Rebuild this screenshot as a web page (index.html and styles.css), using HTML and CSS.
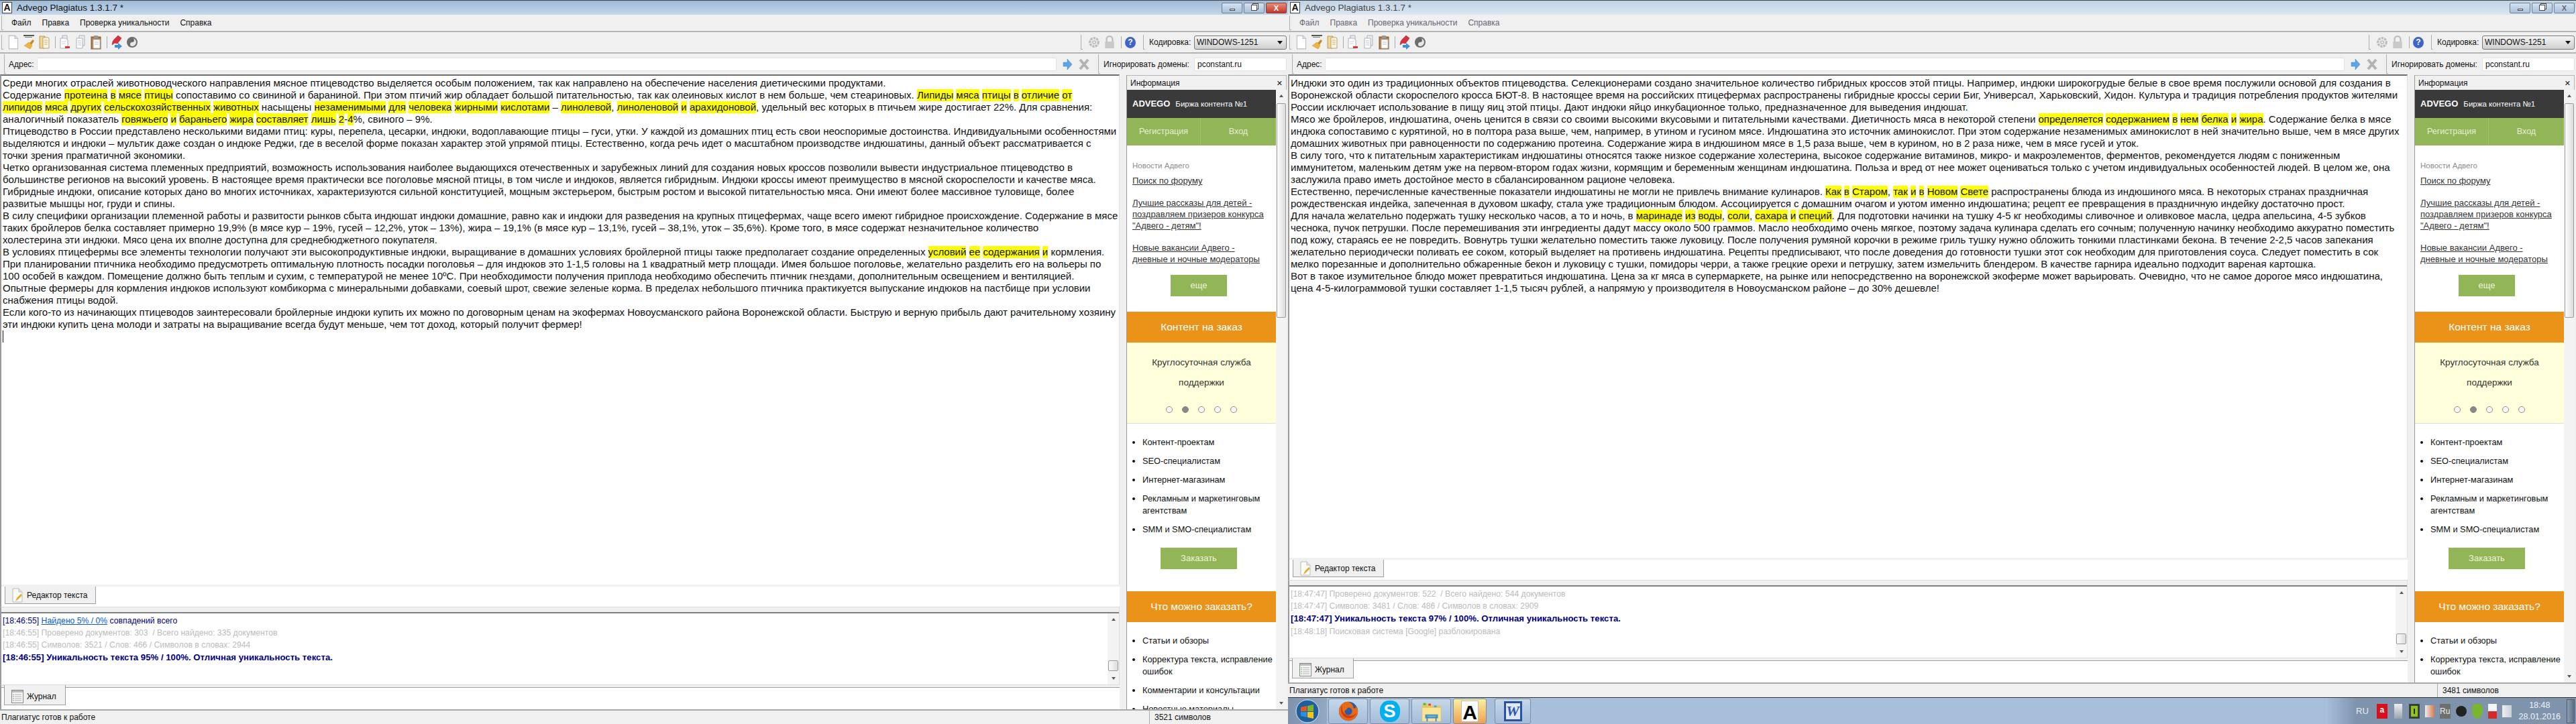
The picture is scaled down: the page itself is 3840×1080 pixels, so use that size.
FILE: index.html
```html
<!DOCTYPE html>
<html lang="ru">
<head>
<meta charset="utf-8">
<title>Advego Plagiatus</title>
<link rel="stylesheet" href="styles.css">
</head>
<body>
<svg class="defs" width="0" height="0">
  <symbol id="i-doc" viewBox="0 0 16 20"><path d="M2 1h8l4 4v14H2z" fill="#fff" stroke="#b5bcc4"/><path d="M10 1v4h4" fill="#dde3ea" stroke="#b5bcc4"/></symbol>
  <symbol id="i-html" viewBox="0 0 18 22"><path d="M15 7l-5 5 3 3 4-6z" fill="#c98a2a"/><path d="M9 11l5 5-3 5-9-5 2-1 1-1z" fill="#f0b43c" stroke="#c98a2a" stroke-width=".5"/><rect x="1" y="0" width="16" height="2" fill="#555"/><rect x="3" y="3" width="11" height="1" fill="#777"/></symbol>
  <symbol id="i-pages" viewBox="0 0 16 22"><path d="M1 2h8v18H1z" fill="#f3d48e" stroke="#bc9a55"/><path d="M6 4h8l1 1v15H6z" fill="#fff6d8" stroke="#a9a38c"/><path d="M8 8h5M8 11h5M8 14h5" stroke="#b5b29c"/></symbol>
  <symbol id="i-docminus" viewBox="0 0 16 22"><path d="M4 1h7v15H4z" fill="#e9edf2" stroke="#aab2bb"/><path d="M1 5h8l3 3v12H1z" fill="#fff" stroke="#aab2bb"/><path d="M3 10h6M3 13h6" stroke="#ccd"/><rect x="8" y="17" width="7" height="3" fill="#d33"/></symbol>
  <symbol id="i-docs" viewBox="0 0 16 22"><path d="M6 1h8v15H6z" fill="#e9edf2" stroke="#aab2bb"/><path d="M2 5h9v15H2z" fill="#fff" stroke="#aab2bb"/><path d="M4 9h5M4 12h5M4 15h5" stroke="#b8c0c8"/></symbol>
  <symbol id="i-clip" viewBox="0 0 16 22"><rect x="1" y="3" width="14" height="18" fill="#b07b48" stroke="#80562f"/><rect x="4" y="7" width="10" height="13" fill="#fff" stroke="#b8b8b8"/><rect x="5" y="1" width="6" height="4" fill="#999"/><path d="M6 11h6M6 14h6" stroke="#bbb"/></symbol>
  <symbol id="i-pin" viewBox="0 0 18 22"><path d="M11 1l5 4-6 8-4-1-4 3 1-5 2-3z" fill="#d8323c" stroke="#962029" stroke-width=".6"/><path d="M6 15h5v-3l6 5-6 5v-3H6z" fill="#3f8fe0"/></symbol>
  <symbol id="i-yin" viewBox="0 0 18 18"><circle cx="9" cy="9" r="8" fill="#6d6d6d"/><path d="M9 3a6 6 0 0 1 0 12a3 3 0 0 1 0-6a3 3 0 0 0 0-6z" fill="#e8e8e8"/><circle cx="9" cy="6" r="1" fill="#555"/></symbol>
  <symbol id="i-gear" viewBox="0 0 16 18"><circle cx="8" cy="9" r="5.5" fill="none" stroke="#bdbdbd" stroke-width="3" stroke-dasharray="3 1"/><circle cx="8" cy="9" r="2" fill="none" stroke="#aaa"/></symbol>
  <symbol id="i-lock" viewBox="0 0 16 18"><path d="M4 8V5a4 4 0 0 1 8 0v3" fill="none" stroke="#bdbdbd" stroke-width="2"/><rect x="2" y="8" width="12" height="9" rx="1" fill="#c9c9c9"/></symbol>
  <symbol id="i-go" viewBox="0 0 16 18"><path d="M2 6h6V1l7 8-7 8v-5H2z" fill="#5aa6e6" stroke="#3f85c4" stroke-width=".5"/></symbol>
  <symbol id="i-stop" viewBox="0 0 16 18"><path d="M2 2l12 14M14 2L2 16" stroke="#b3b3b3" stroke-width="4"/></symbol>
  <symbol id="i-edit" viewBox="0 0 16 22"><path d="M1 1h9l5 5v15H1z" fill="#fbfbf6" stroke="#bbb"/><path d="M10 1v5h5" fill="#e3e3e3" stroke="#bbb"/><path d="M5 20l2-5 6-6 2 2-6 6z" fill="#e3a92f"/></symbol>
  <symbol id="i-log" viewBox="0 0 18 20"><rect x=".5" y=".5" width="17" height="19" fill="#f6f6f6" stroke="#888"/><rect x="1" y="1" width="16" height="3" fill="#bbb"/><path d="M5 7h10M5 10h10M5 13h10M5 16h10" stroke="#b0b0b0"/><path d="M2 7h2M2 10h2M2 13h2M2 16h2" stroke="#6a6"/></symbol>
  <symbol id="i-orb" viewBox="0 0 36 36"><circle cx="18" cy="18" r="17" fill="#1f5f9c" stroke="#dfe9f3"/><path d="M8 12l9-2v8H8z" fill="#e25a1c"/><path d="M18 10l9-2v10h-9z" fill="#7cb52b"/><path d="M8 19h9v8l-9-2z" fill="#2a8fe0"/><path d="M18 19h9v10l-9-2z" fill="#f7c515"/></symbol>
  <symbol id="i-ff" viewBox="0 0 36 36"><circle cx="18" cy="18" r="15" fill="#2a5aa8"/><path d="M18 3a15 15 0 1 0 15 15c0-3-1-6-3-8 0 3-2 4-4 3 0-4-3-8-8-10zM18 12a6 6 0 1 1-6 6z" fill="#e66b16"/><path d="M8 8c-3 5-2 14 4 19 7 4 15 2 19-6-5 5-15 6-20 0-3-4-3-9-3-13z" fill="#d23b10"/></symbol>
  <symbol id="i-fold" viewBox="0 0 36 36"><path d="M3 6h12l3 3h15v8H3z" fill="#e7c56a"/><rect x="5" y="5" width="4" height="3" fill="#2c2"/><rect x="13" y="6" width="4" height="3" fill="#d44"/><rect x="22" y="9" width="4" height="3" fill="#3ad"/><path d="M3 12h30v22H3z" fill="#f9e493" stroke="#d3b866" stroke-width=".6"/><path d="M11 26v8M25 26v8M9 24h18v4H9z" fill="#6fb5e0" stroke="#3f8cc4" stroke-width="2"/></symbol>
</svg>

<main class="screen">
<section class="win active left">
  <header class="titlebar">
    <span class="ticon">A</span><span class="ttext">Advego Plagiatus 1.3.1.7 *</span>
    <div class="wbtns"><span class="wbtn"><i class="min"></i></span><span class="wbtn"><i class="res"></i></span><span class="wbtn close">X</span></div>
  </header>
  <nav class="menubar"><i class="grip"></i><span>Файл</span><span>Правка</span><span>Проверка уникальности</span><span>Справка</span></nav>
  <div class="toolbar">
    <i class="grip"></i>
    <div class="tools">
      <svg class="ic"><use href="#i-doc"/></svg><svg class="ic"><use href="#i-html"/></svg><svg class="ic"><use href="#i-pages"/></svg><b class="sep"></b><svg class="ic"><use href="#i-docminus"/></svg><svg class="ic"><use href="#i-docs"/></svg><svg class="ic"><use href="#i-clip"/></svg><b class="sep"></b><svg class="ic"><use href="#i-pin"/></svg><svg class="ic"><use href="#i-yin"/></svg>
    </div>
    <i class="grip"></i>
    <div class="tools2"><svg class="ic"><use href="#i-gear"/></svg><svg class="ic"><use href="#i-lock"/></svg><b class="sep"></b><span class="help">?</span></div>
    <i class="grip"></i>
    <span class="flabel">Кодировка:</span>
    <div class="select">WINDOWS-1251<em></em></div>
  </div>
  <div class="addrbar">
    <i class="grip"></i><span class="alabel">Адрес:</span><div class="input url"></div>
    <svg class="ic go"><use href="#i-go"/></svg><svg class="ic go"><use href="#i-stop"/></svg>
    <i class="grip"></i>
    <span class="flabel ign">Игнорировать домены:</span><div class="input dom">pconstant.ru</div>
  </div>
  <div class="mainrow">
    <div class="center">
      <article class="editor">
        <p>Среди многих отраслей животноводческого направления мясное птицеводство выделяется особым положением, так как направлено на обеспечение населения диетическими продуктами.</p>
        <p>Содержание <mark>протеина</mark> <mark>в</mark> <mark>мясе</mark> <mark>птицы</mark> сопоставимо со свининой и бараниной. При этом птичий жир обладает большой питательностью, так как олеиновых кислот в нем больше, чем стеариновых. <mark>Липиды</mark> <mark>мяса</mark> <mark>птицы</mark> <mark>в</mark> <mark>отличие</mark> <mark>от</mark></p>
        <p><mark>липидов</mark> <mark>мяса</mark> <mark>других</mark> <mark>сельскохозяйственных</mark> <mark>животных</mark> насыщены <mark>незаменимыми</mark> <mark>для</mark> <mark>человека</mark> <mark>жирными</mark> <mark>кислотами</mark> – <mark>линолевой</mark>, <mark>линоленовой</mark> <mark>и</mark> <mark>арахидоновой</mark>, удельный вес которых в птичьем жире достигает 22%. Для сравнения:</p>
        <p>аналогичный показатель <mark>говяжьего</mark> <mark>и</mark> <mark>бараньего</mark> <mark>жира</mark> <mark>составляет</mark> <mark>лишь</mark> <mark>2</mark>-<mark>4</mark>%, свиного – 9%.</p>
        <p>Птицеводство в России представлено несколькими видами птиц: куры, перепела, цесарки, индюки, водоплавающие птицы – гуси, утки. У каждой из домашних птиц есть свои неоспоримые достоинства. Индивидуальными особенностями</p>
        <p>выделяются и индюки – мультик даже создан о индюке Реджи, где в веселой форме показан характер этой упрямой птицы. Естественно, когда речь идет о масштабном производстве индюшатины, данный объект рассматривается с</p>
        <p>точки зрения прагматичной экономики.</p>
        <p>Четко организованная система племенных предприятий, возможность использования наиболее выдающихся отечественных и зарубежных линий для создания новых кроссов позволили вывести индустриальное птицеводство в</p>
        <p>большинстве регионов на высокий уровень. В настоящее время практически все поголовье мясной птицы, в том числе и индюков, является гибридным. Индюки кроссы имеют преимущество в мясной скороспелости и качестве мяса.</p>
        <p>Гибридные индюки, описание которых дано во многих источниках, характеризуются сильной конституцией, мощным экстерьером, быстрым ростом и высокой питательностью мяса. Они имеют более массивное туловище, более</p>
        <p>развитые мышцы ног, груди и спины.</p>
        <p>В силу специфики организации племенной работы и развитости рынков сбыта индюшат индюки домашние, равно как и индюки для разведения на крупных птицефермах, чаще всего имеют гибридное происхождение. Содержание в мясе</p>
        <p>таких бройлеров белка составляет примерно 19,9% (в мясе кур – 19%, гусей – 12,2%, уток – 13%), жира – 19,1% (в мясе кур – 13,1%, гусей – 38,1%, уток – 35,6%). Кроме того, в мясе содержат незначительное количество</p>
        <p>холестерина эти индюки. Мясо цена их вполне доступна для среднебюджетного покупателя.</p>
        <p>В условиях птицефермы все элементы технологии получают эти высокопродуктивные индюки, выращивание в домашних условиях бройлерной птицы также предполагает создание определенных <mark>условий</mark> <mark>ее</mark> <mark>содержания</mark> <mark>и</mark> кормления.</p>
        <p>При планировании птичника необходимо предусмотреть оптимальную плотность посадки поголовья – для индюков это 1-1,5 головы на 1 квадратный метр площади. Имея большое поголовье, желательно разделить его на вольеры по</p>
        <p>100 особей в каждом. Помещение должно быть теплым и сухим, с температурой не менее 10ºС. При необходимости получения приплода необходимо обеспечить птичник гнездами, дополнительным освещением и вентиляцией.</p>
        <p>Опытные фермеры для кормления индюков используют комбикорма с минеральными добавками, соевый шрот, свежие зеленые корма. В пределах небольшого птичника практикуется выпускание индюков на пастбище при условии</p>
        <p>снабжения птицы водой.</p>
        <p>Если кого-то из начинающих птицеводов заинтересовали бройлерные индюки купить их можно по договорным ценам на экофермах Новоусманского района Воронежской области. Быструю и верную прибыль дают рачительному хозяину</p>
        <p>эти индюки купить цена молоди и затраты на выращивание всегда будут меньше, чем тот доход, который получит фермер!</p>
        <p class="caret"></p>
      </article>
      <div class="tabstrip"><div class="tab"><svg class="tabic"><use href="#i-edit"/></svg>Редактор текста</div></div>
      <div class="log">
        <div class="logbody">
          <p class="navy">[18:46:55] <u>Найдено 5% / 0%</u> совпадений всего</p>
          <p class="grey">[18:46:55] Проверено документов: 303 &nbsp;/ Всего найдено: 335 документов</p>
          <p class="grey">[18:46:55] Символов: 3521 / Слов: 466 / Символов в словах: 2944</p>
          <p class="strong">[18:46:55] Уникальность текста 95% / 100%. Отличная уникальность текста.</p>
        </div>
        <div class="logscroll"><span class="arr up"></span><span class="thumb"></span><span class="arr down"></span></div>
      </div>
      <div class="tabstrip2"><div class="tab tab2"><svg class="tabic"><use href="#i-log"/></svg>Журнал</div></div>
    </div>
    <aside class="side">
      <div class="sidehead"><span>Информация</span><span class="x">&#10005;</span></div>
      <div class="sidebody">
        <div class="web">
          <div class="brand"><strong>ADVEGO</strong><span>Биржа контента №1</span></div>
          <div class="green"><span>Регистрация</span><span>Вход</span></div>
          <div class="news">
            <div class="newstitle">Новости Адвего</div>
            <a>Поиск по форуму</a>
            <a>Лучшие рассказы для детей -<br>поздравляем призеров конкурса<br>"Адвего - детям"!</a>
            <a>Новые вакансии Адвего -<br>дневные и ночные модераторы</a>
          </div>
          <div class="btn more">еще</div>
          <h2 class="orange">Контент на заказ</h2>
          <div class="promo">
            <div>Круглосуточная служба<br>поддержки</div>
            <div class="dots"><i></i><i class="on"></i><i></i><i></i><i></i></div>
          </div>
          <ul class="list">
            <li>Контент-проектам</li><li>SEO-специалистам</li><li>Интернет-магазинам</li><li>Рекламным и маркетинговым агентствам</li><li>SMM и SMO-специалистам</li>
          </ul>
          <div class="btn order">Заказать</div>
          <h2 class="orange second">Что можно заказать?</h2>
          <ul class="list">
            <li>Статьи и обзоры</li><li>Корректура текста, исправление ошибок</li><li>Комментарии и консультации</li><li>Новостные материалы</li>
          </ul>
        </div>
        <div class="sidescroll"><span class="arr up"></span><span class="thumb big"></span><span class="arr down"></span></div>
      </div>
    </aside>
  </div>
  <footer class="status"><span class="stext">Плагиатус готов к работе</span><span class="count">3521 символов</span></footer>
</section>

<div class="rightcol">
<section class="win inactive">
  <header class="titlebar">
    <span class="ticon">A</span><span class="ttext">Advego Plagiatus 1.3.1.7 *</span>
    <div class="wbtns"><span class="wbtn"><i class="min"></i></span><span class="wbtn"><i class="res"></i></span><span class="wbtn closeoff">X</span></div>
  </header>
  <nav class="menubar"><i class="grip"></i><span>Файл</span><span>Правка</span><span>Проверка уникальности</span><span>Справка</span></nav>
  <div class="toolbar">
    <i class="grip"></i>
    <div class="tools">
      <svg class="ic"><use href="#i-doc"/></svg><svg class="ic"><use href="#i-html"/></svg><svg class="ic"><use href="#i-pages"/></svg><b class="sep"></b><svg class="ic"><use href="#i-docminus"/></svg><svg class="ic"><use href="#i-docs"/></svg><svg class="ic"><use href="#i-clip"/></svg><b class="sep"></b><svg class="ic"><use href="#i-pin"/></svg><svg class="ic"><use href="#i-yin"/></svg>
    </div>
    <i class="grip"></i>
    <div class="tools2"><svg class="ic"><use href="#i-gear"/></svg><svg class="ic"><use href="#i-lock"/></svg><b class="sep"></b><span class="help">?</span></div>
    <i class="grip"></i>
    <span class="flabel">Кодировка:</span>
    <div class="select">WINDOWS-1251<em></em></div>
  </div>
  <div class="addrbar">
    <i class="grip"></i><span class="alabel">Адрес:</span><div class="input url"></div>
    <svg class="ic go"><use href="#i-go"/></svg><svg class="ic go"><use href="#i-stop"/></svg>
    <i class="grip"></i>
    <span class="flabel ign">Игнорировать домены:</span><div class="input dom">pconstant.ru</div>
  </div>
  <div class="mainrow">
    <div class="center">
      <article class="editor">
        <p>Индюки это один из традиционных объектов птицеводства. Селекционерами создано значительное количество гибридных кроссов этой птицы. Например, индюки широкогрудые белые в свое время послужили основой для создания в</p>
        <p>Воронежской области скороспелого кросса БЮТ-8. В настоящее время на российских птицефермах распространены гибридные кроссы серии Биг, Универсал, Харьковский, Хидон. Культура и традиция потребления продуктов жителями</p>
        <p>России исключает использование в пищу яиц этой птицы. Дают индюки яйцо инкубационное только, предназначенное для выведения индюшат.</p>
        <p>Мясо же бройлеров, индюшатина, очень ценится в связи со своими высокими вкусовыми и питательными качествами. Диетичность мяса в некоторой степени <mark>определяется</mark> <mark>содержанием</mark> <mark>в</mark> <mark>нем</mark> <mark>белка</mark> <mark>и</mark> <mark>жира</mark>. Содержание белка в мясе</p>
        <p>индюка сопоставимо с курятиной, но в полтора раза выше, чем, например, в утином и гусином мясе. Индюшатина это источник аминокислот. При этом содержание незаменимых аминокислот в ней значительно выше, чем в мясе других</p>
        <p>домашних животных при равноценности по содержанию протеина. Содержание жира в индюшином мясе в 1,5 раза выше, чем в курином, но в 2 раза ниже, чем в мясе гусей и уток.</p>
        <p>В силу того, что к питательным характеристикам индюшатины относятся также низкое содержание холестерина, высокое содержание витаминов, микро- и макроэлементов, ферментов, рекомендуется людям с пониженным</p>
        <p>иммунитетом, маленьким детям уже на первом-втором годах жизни, кормящим и беременным женщинам индюшатина. Польза и вред от нее может оцениваться только с учетом индивидуальных особенностей людей. В целом же, она</p>
        <p>заслужила право иметь достойное место в сбалансированном рационе человека.</p>
        <p>Естественно, перечисленные качественные показатели индюшатины не могли не привлечь внимание кулинаров. <mark>Как</mark> <mark>в</mark> <mark>Старом</mark>, <mark>так</mark> <mark>и</mark> <mark>в</mark> <mark>Новом</mark> <mark>Свете</mark> распространены блюда из индюшиного мяса. В некоторых странах праздничная</p>
        <p>рождественская индейка, запеченная в духовом шкафу, стала уже традиционным блюдом. Ассоциируется с домашним очагом и уютом именно индюшатина; рецепт ее превращения в праздничную индейку достаточно прост.</p>
        <p>Для начала желательно подержать тушку несколько часов, а то и ночь, в <mark>маринаде</mark> <mark>из</mark> <mark>воды</mark>, <mark>соли</mark>, <mark>сахара</mark> <mark>и</mark> <mark>специй</mark>. Для подготовки начинки на тушку 4-5 кг необходимы сливочное и оливковое масла, цедра апельсина, 4-5 зубков</p>
        <p>чеснока, пучок петрушки. После перемешивания эти ингредиенты дадут массу около 500 граммов. Масло необходимо очень мягкое, поэтому задача кулинара сделать его сочным; полученную начинку необходимо аккуратно поместить</p>
        <p>под кожу, стараясь ее не повредить. Вовнутрь тушки желательно поместить также луковицу. После получения румяной корочки в режиме гриль тушку нужно обложить тонкими пластинками бекона. В течение 2-2,5 часов запекания</p>
        <p>желательно периодически поливать ее соком, который выделяет на противень индюшатина. Рецепты предписывают, что после доведения до готовности тушки этот сок необходим для приготовления соуса. Следует поместить в сок</p>
        <p>мелко порезанные и дополнительно обжаренные бекон и луковицу с тушки, помидоры черри, а также грецкие орехи и петрушку, затем измельчить блендером. В качестве гарнира идеально подходит вареная картошка.</p>
        <p>Вот в такое изумительное блюдо может превратиться индюшатина. Цена за кг мяса в супермаркете, на рынке или непосредственно на воронежской экоферме может варьировать. Очевидно, что не самое дорогое мясо индюшатина,</p>
        <p>цена 4-5-килограммовой тушки составляет 1-1,5 тысяч рублей, а напрямую у производителя в Новоусманском районе – до 30% дешевле!</p>
      </article>
      <div class="tabstrip"><div class="tab"><svg class="tabic"><use href="#i-edit"/></svg>Редактор текста</div></div>
      <div class="log">
        <div class="logbody">
          <p class="grey">[18:47:47] Проверено документов: 522 &nbsp;/ Всего найдено: 544 документов</p>
          <p class="grey">[18:47:47] Символов: 3481 / Слов: 486 / Символов в словах: 2909</p>
          <p class="strong">[18:47:47] Уникальность текста 97% / 100%. Отличная уникальность текста.</p>
          <p class="grey">[18:48:18] Поисковая система [Google] разблокирована</p>
        </div>
        <div class="logscroll"><span class="arr up"></span><span class="thumb"></span><span class="arr down"></span></div>
      </div>
      <div class="tabstrip2"><div class="tab tab2"><svg class="tabic"><use href="#i-log"/></svg>Журнал</div></div>
    </div>
    <aside class="side">
      <div class="sidehead"><span>Информация</span><span class="x">&#10005;</span></div>
      <div class="sidebody">
        <div class="web">
          <div class="brand"><strong>ADVEGO</strong><span>Биржа контента №1</span></div>
          <div class="green"><span>Регистрация</span><span>Вход</span></div>
          <div class="news">
            <div class="newstitle">Новости Адвего</div>
            <a>Поиск по форуму</a>
            <a>Лучшие рассказы для детей -<br>поздравляем призеров конкурса<br>"Адвего - детям"!</a>
            <a>Новые вакансии Адвего -<br>дневные и ночные модераторы</a>
          </div>
          <div class="btn more">еще</div>
          <h2 class="orange">Контент на заказ</h2>
          <div class="promo">
            <div>Круглосуточная служба<br>поддержки</div>
            <div class="dots"><i></i><i class="on"></i><i></i><i></i><i></i></div>
          </div>
          <ul class="list">
            <li>Контент-проектам</li><li>SEO-специалистам</li><li>Интернет-магазинам</li><li>Рекламным и маркетинговым агентствам</li><li>SMM и SMO-специалистам</li>
          </ul>
          <div class="btn order">Заказать</div>
          <h2 class="orange second">Что можно заказать?</h2>
          <ul class="list">
            <li>Статьи и обзоры</li><li>Корректура текста, исправление ошибок</li>
          </ul>
        </div>
        <div class="sidescroll"><span class="arr up"></span><span class="thumb big"></span><span class="arr down"></span></div>
      </div>
    </aside>
  </div>
  <footer class="status"><span class="stext">Плагиатус готов к работе</span><span class="count">3481 символов</span></footer>
</section>
<div class="taskbar">
  <div class="start"><svg class="orb"><use href="#i-orb"/></svg></div>
  <div class="tb"><svg><use href="#i-ff"/></svg></div>
  <div class="tb"><span class="skype">S</span></div>
  <div class="tb"><svg><use href="#i-fold"/></svg></div>
  <div class="tb act"><span class="adoc">A</span></div>
  <div class="tb word"><span class="wordic">W</span></div>
  <div class="tray">
    <span class="lang">RU</span>
    <i class="t red">a</i><i class="t net"></i><i class="t nv"></i><i class="t snd"></i><i class="t ru">Ru</i><i class="t ink"></i><i class="t shield"></i><i class="t flag"></i><i class="t snd2"></i>
    <div class="clock"><span>18:48</span><span>28.01.2016</span></div>
    <div class="showdesk"></div>
  </div>
</div>
</div>
</main>
</body>
</html>
```

FILE: styles.css
```css
* { box-sizing: border-box; }
html, body { margin: 0; padding: 0; }
body { width: 3840px; height: 1080px; overflow: hidden; font-family: "Liberation Sans", "DejaVu Sans", sans-serif; font-size: 12px; line-height: 18px; color: #111; background: #f0f0f0; }
.defs { display: block; height: 0; }
.screen { display: flex; width: 3840px; height: 1080px; }
.win { width: 1920px; height: 1080px; display: flex; flex-direction: column; background: #f0f0f0; overflow: hidden; flex: none; }
.rightcol { width: 1920px; height: 1080px; display: flex; flex-direction: column; flex: none; }
.rightcol .win { height: 1040px; }

.titlebar { height: 22px; flex: none; display: flex; align-items: center; border-top: 1px solid #444; padding-left: 3px; background: linear-gradient(#9fbbd8, #c3d6ea); }
.inactive .titlebar { background: linear-gradient(#c0d2e4, #dbe6f1); }
.ticon { width: 15px; height: 17px; background: #fff; border: 1px solid #444; color: #111; font-weight: 700; font-size: 14px; line-height: 15px; text-align: center; flex: none; }
.ttext { margin-left: 7px; font-size: 13.5px; color: #111; }
.inactive .ttext { color: #444; }
.wbtns { margin-left: auto; margin-right: 2px; display: flex; gap: 2px; }
.wbtn { width: 31px; height: 16px; border: 1px solid #6d7f94; border-radius: 2px; background: linear-gradient(#d4e2f0, #a9c1da); display: flex; align-items: center; justify-content: center; color: #333; font-size: 11px; line-height: 14px; }
.min { display: block; width: 8px; height: 3px; margin-top: 5px; border: 1px solid #445; background: #fff; }
.res { display: block; width: 9px; height: 9px; border: 1px solid #445; box-shadow: 2px -2px 0 -1px #fff, 2px -2px 0 0 #445; background: #fff; }
.close { background: linear-gradient(#e88a78, #c0392b); color: #fff; font-weight: 700; border-color: #8b3a2f; }
.closeoff { font-weight: 700; color: #667; }

.menubar { height: 26px; flex: none; display: flex; align-items: center; border-bottom: 2px solid #b4b4b4; padding-left: 2px; }
.menubar span { margin-right: 16px; }
.menubar .grip { margin-right: 12px; }
.inactive .menubar span { color: #667; }
.grip { display: block; width: 3px; height: 22px; flex: none; border-left: 1px solid #b0b0b0; border-bottom: 1px solid #b0b0b0; }

.toolbar { height: 32px; flex: none; display: flex; align-items: center; border-bottom: 2px solid #b4b4b4; padding-left: 2px; }
.tools { display: flex; align-items: center; margin-left: 6px; flex: 1; }
.ic { width: 18px; height: 22px; flex: none; margin-right: 5px; }
.sep { display: block; width: 1px; height: 18px; background: #aaa; margin: 0 5px 0 2px; flex: none; }
.tools2 { display: flex; align-items: center; margin: 0 11px 0 8px; }
.tools2 .ic:nth-child(2) { margin-right: 8px; }
.tools2 .sep { margin: 0 5px 0 0; }
.help { width: 16px; height: 17px; border-radius: 50%; background: #3f63c8; color: #fff; font-weight: 700; font-size: 12px; line-height: 17px; text-align: center; flex: none; }
.flabel { margin-left: 6px; width: 62px; white-space: nowrap; }
.select { width: 138px; height: 21px; margin: 0 2px 0 5px; border: 1px solid #777; border-radius: 3px; background: linear-gradient(#f5f5f5, #cfcfcf); padding: 0 5px 0 3px; display: flex; align-items: center; justify-content: space-between; flex: none; }
.select em { width: 0; height: 0; border: 4px solid transparent; border-top: 5px solid #111; border-bottom: 0; }

.addrbar { height: 31px; flex: none; display: flex; align-items: center; padding-left: 2px; }
.alabel { margin-left: 4px; width: 42px; white-space: nowrap; }
.input { height: 20px; background: #fff; border: 1px solid #e2e2e2; border-radius: 2px; padding-left: 4px; line-height: 18px; }
.url { flex: 1; margin-right: 8px; }
.go { width: 16px; height: 18px; margin-right: 9px; }
.addrbar .grip { height: 29px; margin-left: 4px; }
.ign { width: 129px; margin-left: 5px; flex: none; }
.dom { width: 138px; margin: 0 2px 0 6px; flex: none; }

.mainrow { flex: 1; min-height: 0; display: flex; }
.center { width: 1669px; flex: none; display: flex; flex-direction: column; min-height: 0; }
.editor { flex: 1; min-height: 0; background: #fff; border-top: 2px solid #6e6e6e; border-left: 2px solid #9a9a9a; border-right: 1px solid #ddd; padding: 2px 0 0 2px; overflow: hidden; font-size: 15px; white-space: nowrap; }
.editor p { margin: 0; height: 18px; line-height: 18px; }
mark { display: inline-block; background: #ff0; color: inherit; height: 18px; }
.caret { width: 1px; background: #111; }

.tabstrip { height: 34px; flex: none; padding-top: 3px; border-bottom: 1px solid #ddd; border-left: 2px solid #9a9a9a; background: linear-gradient(#f0f0f0 3px, #fff 3px); }
.tab { width: 136px; height: 26px; margin-left: 5px; display: flex; align-items: center; gap: 6px; padding-left: 10px; background: #f0f0f0; border: 1px solid #9f9f9f; border-top: 0; white-space: nowrap; }
.tabic { width: 16px; height: 22px; flex: none; }
.log { height: 116px; flex: none; padding-top: 9px; display: flex; background: linear-gradient(#f0f0f0 7px, #808080 7px, #808080 9px, #fff 9px); border-left: 2px solid #9a9a9a; border-right: 1px solid #ddd; border-bottom: 1px solid #ddd; }
.logbody { flex: 1; padding: 2px 0 0 2px; white-space: nowrap; }
.logbody p { margin: 0; line-height: 18px; font-size: 12.2px; }
.navy { color: #00007f; }
.navy u { color: #0a5ad0; }
.grey { color: #bbb; }
.logbody .strong { color: #00007f; font-size: 13.2px; font-weight: 700; line-height: 20px; }
.logscroll, .sidescroll { width: 17px; flex: none; background: #f3f3f3; display: flex; flex-direction: column; align-items: center; }
.arr { width: 0; height: 0; margin: 7px 0; border: 3px solid transparent; flex: none; }
.arr.up { border-bottom: 4px solid #555; border-top: 0; }
.arr.down { border-top: 4px solid #555; border-bottom: 0; }
.thumb { width: 15px; height: 16px; margin-top: auto; margin-bottom: 2px; border: 1px solid #999; border-radius: 2px; background: linear-gradient(90deg, #fdfdfd, #dcdcdc); flex: none; }
.tabstrip2 { height: 36px; flex: none; padding-top: 4px; border-left: 2px solid #9a9a9a; background: linear-gradient(#f0f0f0 3px, #9f9f9f 3px, #9f9f9f 4px, #fff 4px); }
.tab2 { width: 92px; margin-left: 4px; margin-top: -4px; height: 30px; padding-top: 4px; gap: 5px; }
.tab2 .tabic { width: 18px; height: 20px; }

.side { width: 239px; margin-left: 10px; margin-top: 1px; flex: none; display: flex; flex-direction: column; border-left: 1px solid #9a9a9a; min-height: 0; }
.sidehead { height: 22px; flex: none; display: flex; justify-content: space-between; align-items: center; padding: 0 5px; border: 1px solid #b5b5b5; border-left: 0; border-bottom: 0; }
.x { font-size: 11px; }
.sidebody { flex: 1; min-height: 0; display: flex; overflow: hidden; }
.web { width: 222px; flex: none; background: #fff; overflow: hidden; }
.sidescroll { width: 16px; }
.thumb.big { margin-top: 2px; margin-bottom: auto; height: 320px; width: 14px; }
.brand { height: 42px; background: #3a3a3a; color: #fff; display: flex; align-items: center; padding-left: 8px; gap: 8px; white-space: nowrap; }
.brand strong { font-size: 13px; font-weight: 700; }
.brand span { font-size: 11.5px; }
.green { height: 41px; display: flex; background: #92b558; color: #e6efd2; align-items: center; }
.green span { height: 41px; line-height: 41px; text-align: center; font-size: 12.5px; }
.green span:first-child { width: 110px; border-right: 1px solid #a1c06c; }
.green span:last-child { flex: 1; }
.news { padding: 21px 0 0 8px; }
.newstitle { color: #8c8c8c; font-size: 11.5px; line-height: 18px; margin-bottom: 5px; }
.news a { display: block; color: #333; text-decoration: underline; line-height: 17px; margin-bottom: 16px; font-size: 13px; white-space: nowrap; }
.btn { background: #92b558; color: #eef4dc; text-align: center; line-height: 32px; height: 32px; font-size: 13px; }
.more { width: 84px; margin: -1px 0 0 65px; }
.orange { margin: 23px 0 0; height: 46px; background: #ea9318; color: #fff; font-size: 15.5px; font-weight: 400; line-height: 46px; text-align: center; }
.promo { height: 121px; background: #ffffdc; border-bottom: 1px solid #ddd; padding-top: 15px; text-align: center; font-size: 13.5px; line-height: 30px; color: #333; }
.dots { display: flex; justify-content: center; gap: 14px; margin-top: 20px; }
.dots i { width: 10px; height: 10px; border: 1px solid #888; border-radius: 50%; background: #fff; }
.dots i.on { background: #888; }
.list { margin: 0; padding: 19px 0 0 23px; font-size: 12.8px; }
.list li { margin-bottom: 10px; line-height: 18px; }
.order { width: 114px; margin: 18px 0 0 50px; }
.second { margin-top: 33px; }

.status { height: 22px; flex: none; display: flex; align-items: stretch; border-top: 2px solid #aaa; padding-left: 2px; }
.stext { line-height: 21px; }
.count { margin-left: auto; margin-right: 20px; width: 187px; padding-left: 7px; border-left: 1px solid #aaa; line-height: 21px; }

.taskbar { height: 40px; flex: none; display: flex; align-items: stretch; background: #a7bfdb; border-top: 1px solid #333; }
.start { width: 58px; background: linear-gradient(90deg, #7e93ad, #92a8c3); display: flex; align-items: center; justify-content: center; }
.orb { width: 36px; height: 36px; }
.tb { width: 59px; margin: 1px 1px 0 2px; display: flex; align-items: center; justify-content: center; border: 1px solid #7a8ea8; border-radius: 3px; background: linear-gradient(#c6d8ea, #a3bcd8); }
.tb svg { width: 34px; height: 34px; }
.skype { width: 30px; height: 32px; border-radius: 45%; background: #00aff0; color: #fff; font-weight: 700; font-size: 27px; line-height: 32px; text-align: center; }
.adoc { width: 26px; height: 32px; background: #fff; border: 1px solid #bbb; color: #000; font-weight: 700; font-size: 30px; line-height: 34px; text-align: center; }
.wordic { width: 27px; height: 30px; background: #dfe8f6; border: 3px solid #2a4fa5; color: #2a54b5; font-family: "Liberation Serif", serif; font-weight: 700; font-style: italic; font-size: 22px; line-height: 24px; text-align: center; }
.tb.act { background: linear-gradient(#faf0a0, #f0a050); width: 50px; }
.tb.word { margin-left: 11px; width: 54px; }
.tray { margin-left: auto; width: 372px; display: flex; align-items: center; background: linear-gradient(90deg, #a7bfdb, #7f93ac 12%, #7f93ac); padding-left: 44px; }
.lang { color: #e6edf5; font-size: 13px; margin-right: 12px; flex: none; }
.t { display: block; width: 16px; height: 22px; margin-right: 8px; flex: none; font-style: normal; background: #dde4ec; }
.t.red { background: #d9101c; color: #fff; text-align: center; font-weight: 700; }
.t.net { background: linear-gradient(#eee, #99a4b0); width: 12px; margin: 0 10px 0 2px; }
.t.nv { background: #1f2a22; box-shadow: inset 0 0 0 3px #3a3f3b, inset 0 0 0 7px #8fc31f; }
.t.snd { background: linear-gradient(90deg, #eee, #d6794e); width: 14px; height: 18px; }
.t.ru { background: #6f6f6f; color: #eee; font-size: 12px; line-height: 22px; text-align: center; }
.t.ink { background: #222; border-radius: 50%; height: 16px; }
.t.shield { background: #79b52e; border-radius: 40% 40% 60% 60%; }
.t.flag { background: linear-gradient(#f5f5f5 50%, #d42a2a 50%); width: 13px; }
.t.snd2 { background: linear-gradient(90deg, #eee, #c8d0da); width: 14px; height: 18px; margin-right: 0; }
.clock { color: #eef3f8; font-size: 12.5px; text-align: center; margin-left: 10px; line-height: 17px; display: flex; flex-direction: column; width: 64px; flex: none; }
.showdesk { width: 12px; height: 36px; margin-left: auto; margin-right: 2px; border: 1px solid #4e5c6e; background: linear-gradient(90deg, #8f9fb3, #5f6f82); flex: none; }
```
